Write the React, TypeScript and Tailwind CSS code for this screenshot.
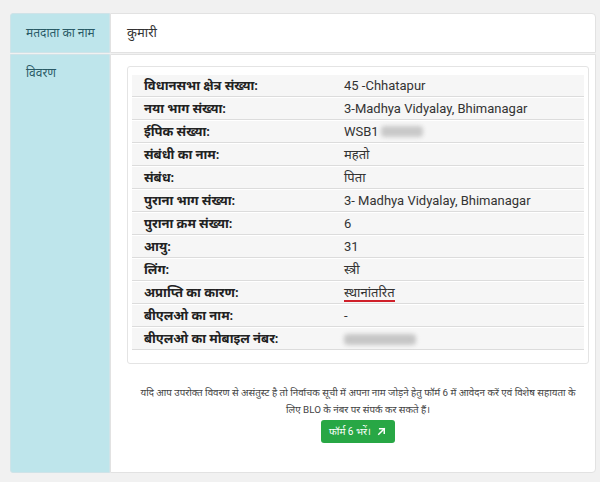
import React from "react";

const rows: [string, React.ReactNode][] = [
  ["विधानसभा क्षेत्र संख्या:", "45 -Chhatapur"],
  ["नया भाग संख्या:", "3-Madhya Vidyalay, Bhimanagar"],
  [
    "ईपिक संख्या:",
    <span className="inline-flex items-center">
      WSB1
      <span className="ml-[2px] inline-block h-[11px] w-[42px] rounded-sm bg-[#c9c9c9] blur-[2px]" />
    </span>,
  ],
  ["संबंधी का नाम:", "महतो"],
  ["संबंध:", "पिता"],
  ["पुराना भाग संख्या:", "3- Madhya Vidyalay, Bhimanagar"],
  ["पुराना क्रम संख्या:", "6"],
  ["आयु:", "31"],
  ["लिंग:", "स्त्री"],
  [
    "अप्राप्ति का कारण:",
    <span className="border-b-2 border-[#d0202a] leading-[15px]">स्थानांतरित</span>,
  ],
  ["बीएलओ का नाम:", "-"],
  [
    "बीएलओ का मोबाइल नंबर:",
    <span className="inline-block h-[11px] w-[72px] rounded-sm bg-[#c6c6c6] blur-[2px] align-middle" />,
  ],
];

export default function App() {
  return (
    <div
      className="h-[482px] w-[600px] bg-[#f1f1f1] pl-[10px] pr-[4px] pt-[13px] text-[#333]"
      style={{ fontFamily: "Roboto, 'Noto Sans', 'Noto Sans Devanagari', sans-serif" }}
    >
      <div className="flex h-[40px]">
        <div className="flex w-[100px] items-center rounded-tl-[3px] border border-[#cfe3e8] bg-[#bee5eb] pl-[15px] text-[12px] text-[#2a5a66]">
          मतदाता का नाम
        </div>
        <div className="flex flex-1 items-center rounded-tr-[4px] border border-[#e2e2e2] bg-white pl-[16px] text-[13px] text-[#333]">
          कुमारी
        </div>
      </div>
      <div className="mt-[1px] flex h-[419px]">
        <div className="w-[100px] rounded-bl-[3px] border border-[#cfe3e8] bg-[#bee5eb] pl-[15px] pt-[9px] text-[12px] text-[#2a5a66]">
          विवरण
        </div>
        <div className="flex flex-1 flex-col rounded-br-[4px] border border-[#e2e2e2] bg-white pl-[16px] pr-[6px] pt-[11px]">
          <div className="rounded-[3px] border border-[#e4e4e4] pb-[13px] pl-[4px] pr-[4px] pt-[7px]">
            {rows.map(([label, value], i) => (
              <div
                key={i}
                className="flex h-[23px] items-center border-t border-b border-t-white border-b-[#dcdcdc] bg-[#f6f6f6] text-[13px]"
              >
                <div className="w-[212px] pl-[12px] font-bold text-[#222]">{label}</div>
                <div className="flex-1 text-[#333]">{value}</div>
              </div>
            ))}
          </div>
          <div className="mt-[20px] px-[10px] text-center text-[9.8px] leading-[17px] text-[#444]">
            यदि आप उपरोक्त विवरण से असंतुस्ट है तो निर्वाचक सूची में अपना नाम जोड़ने हेतु फॉर्म 6 में आवेदन करें एवं विशेष सहायता के लिए BLO के नंबर पर संपर्क कर सकते हैं।
          </div>
          <div className="mt-[2px] flex justify-center">
            <button className="flex h-[23px] items-center gap-[5px] rounded-[3px] bg-[#28a745] px-[8px] text-[10px] text-white">
              फॉर्म 6 भरें।
              <svg width="11" height="11" viewBox="0 0 24 24" fill="none" stroke="white" strokeWidth="3.2" strokeLinecap="square">
                <path d="M6 18 18 6" />
                <path d="M8 6h10v10" />
              </svg>
            </button>
          </div>
        </div>
      </div>
    </div>
  );
}
